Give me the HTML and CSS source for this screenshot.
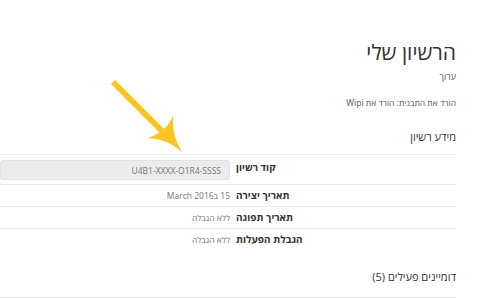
FILE: index.html
```html
<!DOCTYPE html>
<html lang="he" dir="rtl">
<head>
  <meta charset="UTF-8" />
  <meta name="viewport" content="width=device-width, initial-scale=1.0"/>
  <title>הרשיון שלי</title>
  <link rel="stylesheet" href="styles.css">
</head>
<body>

  <div class="page">
    <h1 class="title">הרשיון שלי</h1>
    <a class="edit" href="#">ערוך</a>
    <p class="download">הורד את התבנית: <a href="#">הורד את Wipi</a></p>

    <h2 class="section">מידע רשיון</h2>
    <div class="info">
      <div class="row row-code">
        <div class="label">קוד רשיון</div>
        <div class="value"><input class="code" type="text" value="U4B1-XXXX-O1R4-SSSS" readonly></div>
      </div>
      <div class="row">
        <div class="label">תאריך יצירה</div>
        <div class="value">15 בMarch 2016</div>
      </div>
      <div class="row">
        <div class="label">תאריך תפוגה</div>
        <div class="value">ללא הגבלה</div>
      </div>
      <div class="row">
        <div class="label">הגבלת הפעלות</div>
        <div class="value">ללא הגבלה</div>
      </div>
    </div>

    <h2 class="section domains">דומיינים פעילים (5)</h2>
  </div>

  <!-- pointer arrow over the licence code -->
  <svg class="arrow" width="491" height="300" viewBox="0 0 491 300">
    <line x1="113" y1="82" x2="166" y2="135" stroke="#fbc525" stroke-width="6"/>
    <path d="M182,152 Q172,137 173,116 Q167,131 148,138 Q168,139 182,152 Z" fill="#fbc525"/>
  </svg>

</body>
</html>
```

FILE: styles.css
```css
body {
  font-family: "Open Sans", "Noto Sans", sans-serif;
  margin: 0;
  padding: 0;
  background-color: #fff;
  color: #333;
  overflow: hidden;
}

.page {
  width: 456px;
  margin-left: 0;
  margin-right: auto;
  padding-top: 36px;
}

.title {
  font-size: 21px;
  font-weight: normal;
  margin: 0;
  line-height: 32px;
  color: #333;
}

.edit {
  display: block;
  margin-top: 2px;
  font-size: 9px;
  line-height: 14px;
  color: #555;
  text-decoration: none;
}

.download {
  margin: 12px 0 0;
  font-size: 8.5px;
  line-height: 14px;
  color: #555;
}

.download a {
  color: #555;
  text-decoration: none;
}

.section {
  font-size: 11px;
  font-weight: normal;
  margin: 18px 0 0;
  line-height: 18px;
  padding-bottom: 8px;
  color: #333;
}

.domains {
  margin-top: 18px;
  padding-bottom: 11px;
  border-bottom: 1px solid #eaeaea;
}

.row {
  display: grid;
  grid-template-columns: 220px 1fr;
  column-gap: 6px;
  border-top: 1px solid #eaeaea;
  padding: 3px 0;
  font-size: 10px;
  line-height: 15px;
}

.row-code {
  padding: 5px 0 4px;
}

.label {
  text-align: left;
  font-weight: bold;
  color: #333;
}

.row-code .label {
  padding-top: 0;
}

.value {
  color: #777;
  text-align: right;
  font-size: 8.5px;
}

.code {
  display: block;
  width: 100%;
  box-sizing: border-box;
  height: 20px;
  margin: 0;
  padding: 0 8px;
  border: 1px solid #e2e2e2;
  border-radius: 3px;
  background-color: #ececec;
  color: #777;
  font-family: "Open Sans", "Noto Sans", sans-serif;
  font-size: 8.5px;
  text-align: right;
  direction: ltr;
}

.arrow {
  position: absolute;
  top: 0;
  left: 0;
  pointer-events: none;
}
```
